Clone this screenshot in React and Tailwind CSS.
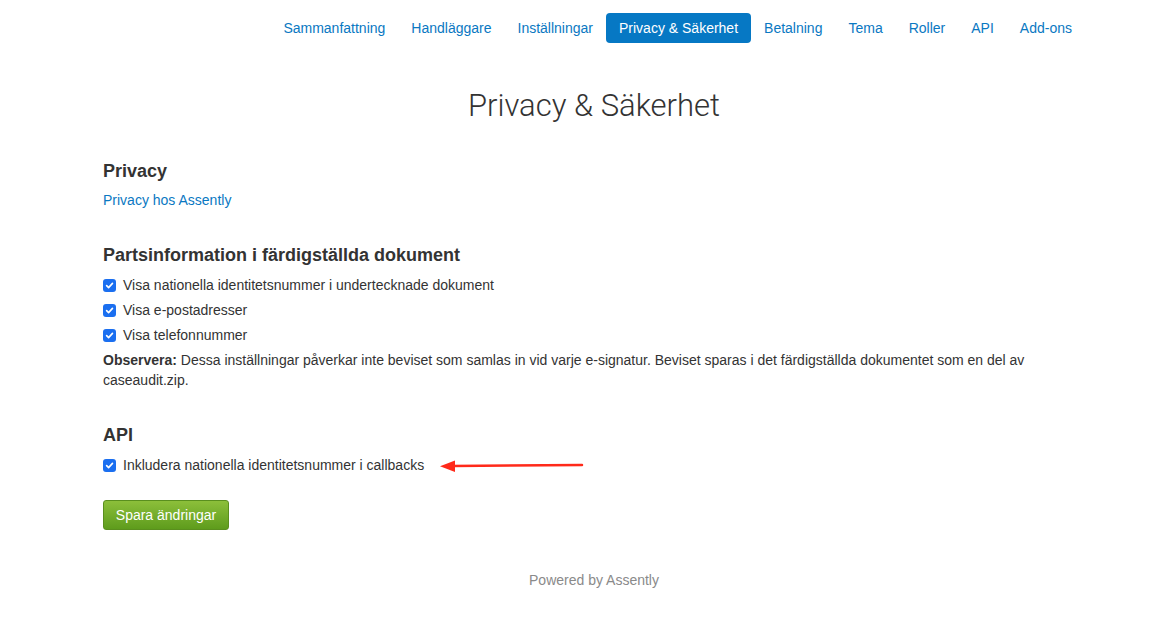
import React from 'react';

const navItems = [
  'Sammanfattning',
  'Handläggare',
  'Inställningar',
  'Privacy & Säkerhet',
  'Betalning',
  'Tema',
  'Roller',
  'API',
  'Add-ons',
];

function Checkbox() {
  return (
    <span className="inline-flex items-center justify-center w-[13px] h-[13px] rounded-[3px] bg-[#1b6ff0] shrink-0">
      <svg width="9" height="9" viewBox="0 0 10 10" fill="none">
        <path d="M1.8 5.2 L4 7.4 L8.3 2.6" stroke="white" strokeWidth="1.8" strokeLinecap="round" strokeLinejoin="round" />
      </svg>
    </span>
  );
}

function CheckRow({ label, children }) {
  return (
    <div className="flex items-center h-[25px]">
      <Checkbox />
      <span className="ml-[7px]">{label}</span>
      {children}
    </div>
  );
}

export default function App() {
  return (
    <div className="min-h-[625px] bg-white text-[14px] text-[#333] font-['Liberation_Sans',Arial,sans-serif]">
      <div className="ml-[103px] w-[982px]">
        {/* Top navigation */}
        <nav className="flex justify-end pt-[13px]">
          {navItems.map((item) =>
            item === 'Privacy & Säkerhet' ? (
              <a key={item} className="h-[30px] px-[13px] flex items-center rounded-[4px] bg-[#0678c4] text-white">
                {item}
              </a>
            ) : (
              <a key={item} className="h-[30px] px-[13px] flex items-center text-[#0a78c2]">
                {item}
              </a>
            )
          )}
        </nav>

        <h1 className="text-center text-[31px] font-light text-[#333] mt-[45px] leading-[36px] font-['Roboto',sans-serif]">
          Privacy &amp; Säkerhet
        </h1>

        <main className="mt-[37px]">
          <h2 className="text-[18px] font-bold leading-[20px]">Privacy</h2>
          <a className="block mt-[9px] leading-[20px] text-[#0a78c2]">Privacy hos Assently</a>

          <h2 className="text-[18px] font-bold leading-[20px] mt-[35px]">
            Partsinformation i färdigställda dokument
          </h2>
          <div className="mt-[8px]">
            <CheckRow label="Visa nationella identitetsnummer i undertecknade dokument" />
            <CheckRow label="Visa e-postadresser" />
            <CheckRow label="Visa telefonnummer" />
          </div>
          <p className="leading-[20px] mt-[2px] w-[940px]">
            <b>Observera: </b>Dessa inställningar påverkar inte beviset som samlas in vid varje e-signatur. Beviset sparas i det färdigställda dokumentet som en del av caseaudit.zip.
          </p>

          <h2 className="text-[18px] font-bold leading-[20px] mt-[35px]">API</h2>
          <div className="mt-[8px]">
            <CheckRow label="Inkludera nationella identitetsnummer i callbacks">
              <svg width="145" height="16" viewBox="0 0 145 16" className="ml-[16px]">
                <line x1="12" y1="8" x2="142" y2="7" stroke="#ff2a1a" strokeWidth="2.5" strokeLinecap="round" />
                <polygon points="0,8.3 15,2.5 15,14" fill="#ff2a1a" />
              </svg>
            </CheckRow>
          </div>

          <button className="mt-[22px] h-[30px] w-[126px] rounded-[3px] border border-[#5a8f1e] bg-gradient-to-b from-[#8cbf3a] to-[#5e9c1c] text-white text-[14px]">
            Spara ändringar
          </button>
        </main>

        <footer className="text-center text-[#8a8a8a] mt-[40px] leading-[20px]">Powered by Assently</footer>
      </div>
    </div>
  );
}
